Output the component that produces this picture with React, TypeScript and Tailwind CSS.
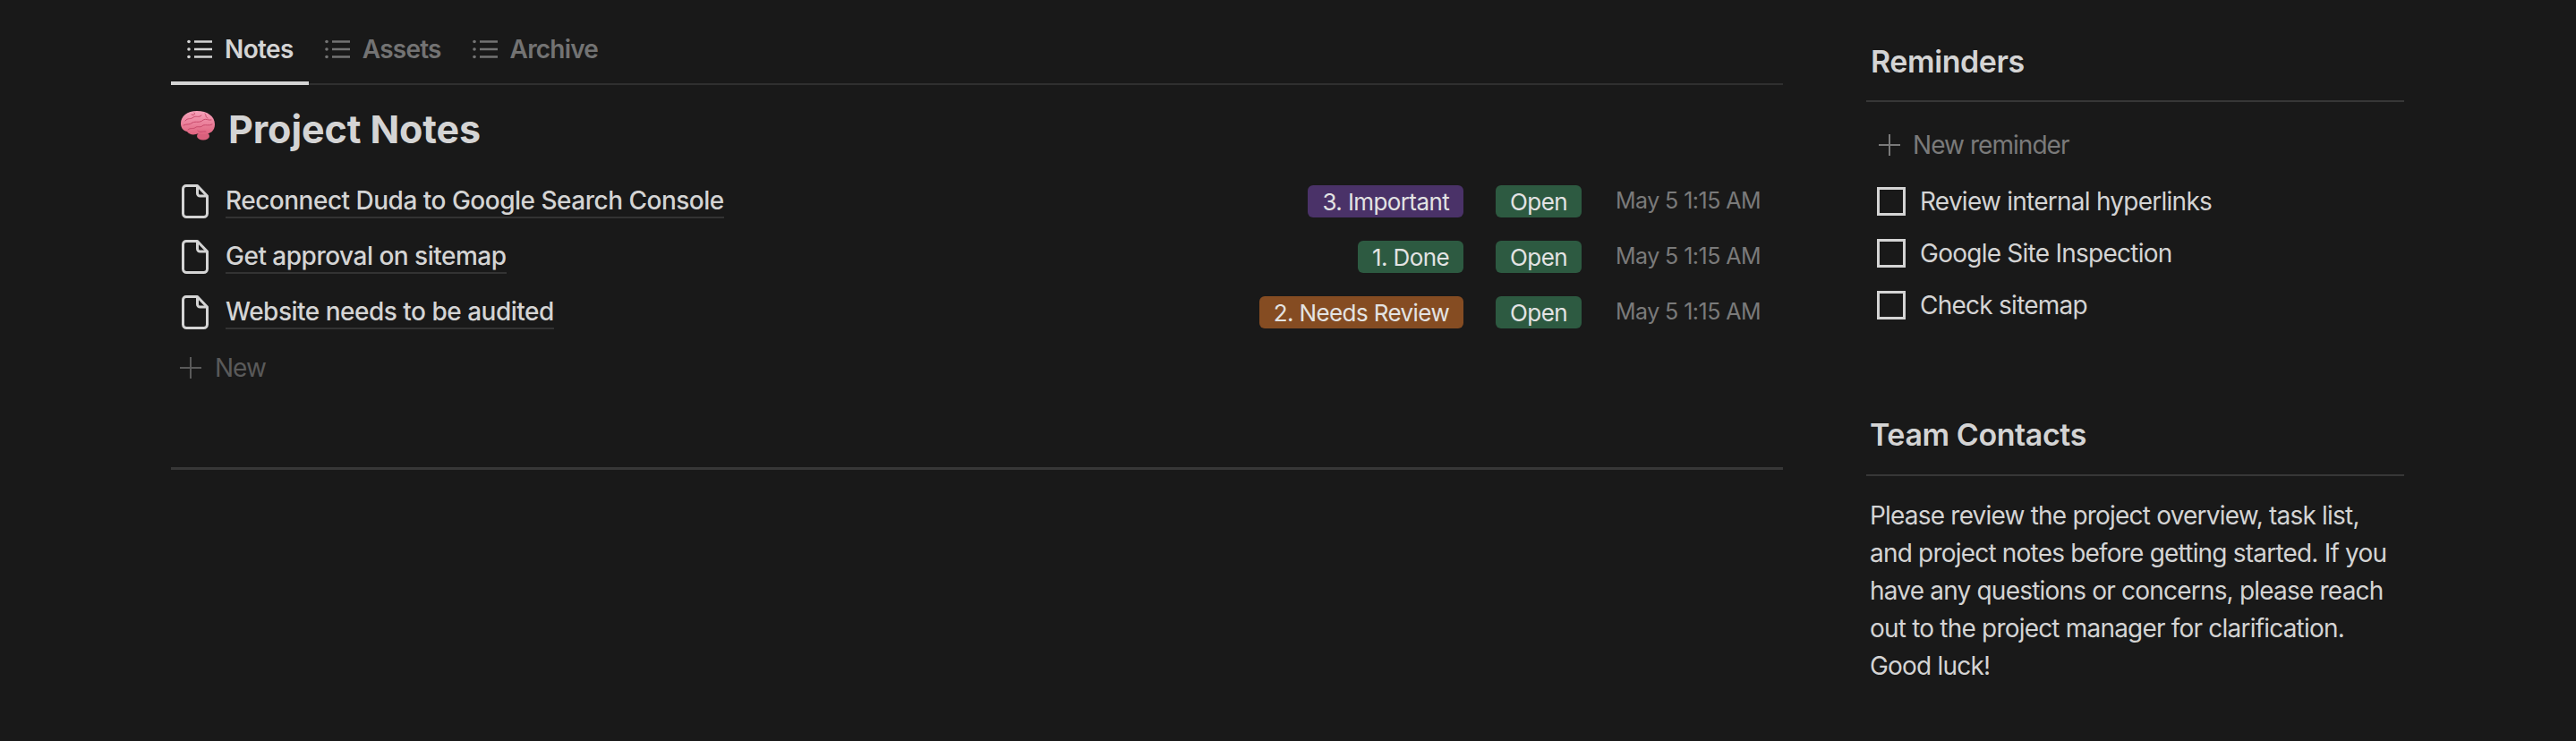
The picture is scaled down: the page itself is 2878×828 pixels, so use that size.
import React from "react";

function ListIcon({ className }: { className: string }) {
  return (
    <svg viewBox="0 0 28 24" className={className} fill="none" stroke="currentColor">
      <circle cx="2" cy="3.5" r="1.8" fill="currentColor" stroke="none" />
      <circle cx="2" cy="12" r="1.8" fill="currentColor" stroke="none" />
      <circle cx="2" cy="20.5" r="1.8" fill="currentColor" stroke="none" />
      <path d="M8 3.5H28M8 12H28M8 20.5H28" strokeWidth="2.4" />
    </svg>
  );
}

function FileIcon() {
  return (
    <svg viewBox="0 0 30 38" className="w-[30px] h-[38px] shrink-0 text-[#d4d4d4]" fill="none" stroke="currentColor" strokeWidth="3" strokeLinejoin="round">
      <path d="M5 1.5H17.5L28.5 13V32.5C28.5 34.7 26.7 36.5 24.5 36.5H5.5C3.3 36.5 1.5 34.7 1.5 32.5V5C1.5 3 3 1.5 5 1.5Z" />
      <path d="M17.5 1.5V10C17.5 11.7 18.8 13 20.5 13H28.5" />
    </svg>
  );
}

function PlusIcon({ className }: { className: string }) {
  return (
    <svg viewBox="0 0 24 24" className={className} fill="none" stroke="currentColor" strokeWidth="2">
      <path d="M12 0V24M0 12H24" />
    </svg>
  );
}

function Brain() {
  return (
    <svg viewBox="0 0 40 34" className="w-[40px] h-[34px] shrink-0">
      <defs>
        <linearGradient id="b" x1="0" y1="0" x2="0" y2="1">
          <stop offset="0" stopColor="#f7a3bb" />
          <stop offset="1" stopColor="#e0637f" />
        </linearGradient>
      </defs>
      <ellipse cx="26" cy="29" rx="7" ry="4.5" fill="#d9607c" />
      <path d="M1 15C1 7 8 1 19 1C31 1 39 7 39 16C39 23 34 27 27 27C23 27 21 26 18 27C14 28 10 27 8 24C3 23 1 19 1 15Z" fill="url(#b)" />
      <g fill="none" stroke="#c94a6c" strokeWidth="1" strokeLinecap="round">
        <path d="M6 12C9 8 12 11 15 8C18 6 21 9 24 6" />
        <path d="M4 17C8 15 11 17 14 14C18 12 22 15 26 11C29 9 32 12 35 11" />
        <path d="M9 22C12 19 15 22 18 19C21 18 23 20 26 17C29 16 32 18 36 16" />
        <path d="M16 3C18 5 15 6 13 5M28 4C30 6 28 8 31 9M20 23C22 26 26 23 29 24" />
      </g>
    </svg>
  );
}

function Tab({ label, active }: { label: string; active?: boolean }) {
  return (
    <div className={active ? "flex items-center gap-[14px] h-[95px] pl-[18px] pr-[17px] pt-[18px] border-b-4 border-[#d4d4d4] text-[#d4d4d4]" : "flex items-center gap-[14px] h-[95px] pl-[18px] pr-[17px] pt-[18px] border-b-4 border-transparent text-[#737373]"}>
      <ListIcon className="w-[28px] h-[24px]" />
      <span className={active ? "text-[28px] font-semibold tracking-[-0.6px]" : "text-[28px] font-semibold tracking-[-0.8px]"}>{label}</span>
    </div>
  );
}

function Tag({ label, color }: { label: string; color: string }) {
  return (
    <span className={"h-[36px] px-[16px] flex items-center rounded-[6px] text-[26px] tracking-[-0.6px] text-[#e3e3e3] " + color}>{label}</span>
  );
}

function Row({ title, tag, color }: { title: string; tag: string; color: string }) {
  return (
    <div className="h-[62px] flex items-center pl-[12px] pr-[25px]">
      <FileIcon />
      <span className="ml-[19px] text-[28px] leading-[36px] font-medium tracking-[-0.5px] text-[#d4d4d4] border-b-2 border-[#333333]">{title}</span>
      <div className="ml-auto flex items-center gap-[36px]">
        <Tag label={tag} color={color} />
        <Tag label="Open" color="bg-[#2d5a41]" />
        <span className="ml-[2px] text-[25px] tracking-[-0.55px] text-[#7a7a7a]">May 5 1:15 AM</span>
      </div>
    </div>
  );
}

function Check({ label }: { label: string }) {
  return (
    <div className="h-[58px] flex items-center pl-[12px]">
      <span className="w-[32px] h-[32px] border-[3px] border-[#d4d4d4] shrink-0" />
      <span className="ml-[16px] text-[28px] tracking-[-0.75px] text-[#d4d4d4]">{label}</span>
    </div>
  );
}

export default function App() {
  return (
    <div className="w-full h-[828px] bg-[#191919] overflow-hidden flex font-['Inter',sans-serif]">
      <div className="ml-[191px] w-[1801px] shrink-0">
        <div className="flex border-b-2 border-[#2f2f2f] h-[95px]">
          <Tab label="Notes" active />
          <Tab label="Assets" />
          <Tab label="Archive" />
        </div>
        <div className="h-[99px] flex items-center pl-[10px]">
          <div className="-mt-[10px]"><Brain /></div>
          <h1 className="ml-[14px] text-[43px] font-bold tracking-[-0.1px] text-[#d4d4d4]">Project Notes</h1>
        </div>
        <Row title="Reconnect Duda to Google Search Console" tag="3. Important" color="bg-[#4a3268]" />
        <Row title="Get approval on sitemap" tag="1. Done" color="bg-[#2d5a41]" />
        <Row title="Website needs to be audited" tag="2. Needs Review" color="bg-[#854c22]" />
        <div className="h-[62px] flex items-center pl-[10px] text-[#5a5a5a]">
          <PlusIcon className="w-[24px] h-[24px]" />
          <span className="ml-[15px] text-[28px] tracking-[-1px]">New</span>
        </div>
        <div className="mt-[80px] h-[3px] bg-[#373737]" />
      </div>

      <div className="ml-[93px] w-[601px] shrink-0">
        <div className="h-[112px] pl-[5px] pt-[45px]">
          <h3 className="text-[34px] leading-[48px] font-semibold tracking-[-0.42px] text-[#d4d4d4]">Reminders</h3>
        </div>
        <div className="h-[2px] bg-[#373737]" />
        <div className="h-[82px] flex items-center pl-[14px] pt-[14px] text-[#7a7a7a]">
          <PlusIcon className="w-[24px] h-[24px]" />
          <span className="ml-[14px] text-[28px] tracking-[-0.95px]">New reminder</span>
        </div>
        <Check label="Review internal hyperlinks" />
        <Check label="Google Site Inspection" />
        <Check label="Check sitemap" />
        <div className="h-[160px] pl-[4px] pt-[92px]">
          <h3 className="text-[34px] leading-[48px] font-semibold tracking-[-0.42px] text-[#d4d4d4]">Team Contacts</h3>
        </div>
        <div className="h-[2px] bg-[#373737]" />
        <p className="mt-[23px] pl-[4px] whitespace-nowrap text-[28px] leading-[42px] tracking-[-0.8px] text-[#d4d4d4]">
          Please review the project overview, task list,<br />
          and project notes before getting started. If you<br />
          have any questions or concerns, please reach<br />
          out to the project manager for clarification.<br />
          Good luck!
        </p>
      </div>
    </div>
  );
}
